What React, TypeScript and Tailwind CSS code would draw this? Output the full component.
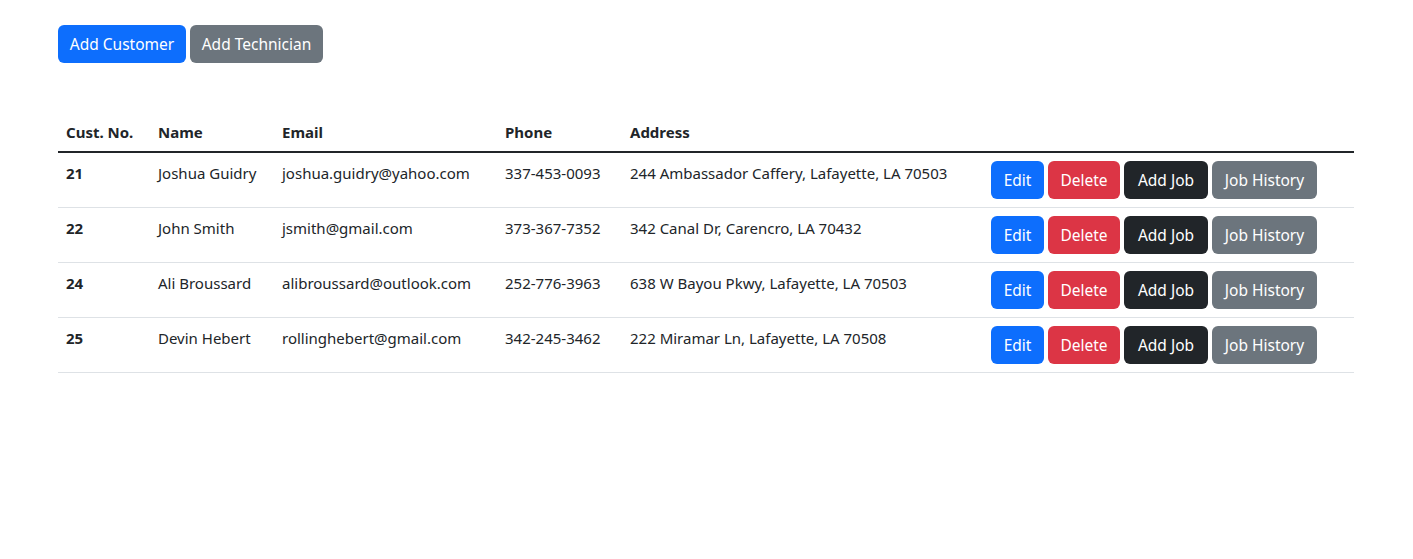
import React from "react";

const rows = [
  { no: "21", name: "Joshua Guidry", email: "joshua.guidry@yahoo.com", phone: "337-453-0093", address: "244 Ambassador Caffery, Lafayette, LA 70503" },
  { no: "22", name: "John Smith", email: "jsmith@gmail.com", phone: "373-367-7352", address: "342 Canal Dr, Carencro, LA 70432" },
  { no: "24", name: "Ali Broussard", email: "alibroussard@outlook.com", phone: "252-776-3963", address: "638 W Bayou Pkwy, Lafayette, LA 70503" },
  { no: "25", name: "Devin Hebert", email: "rollinghebert@gmail.com", phone: "342-245-3462", address: "222 Miramar Ln, Lafayette, LA 70508" },
];

export default function App() {
  return (
    <div
      className="min-h-[559px] bg-white text-[#212529] text-[16px] leading-[24px]"
      style={{ fontFamily: '"Noto Sans", "Open Sans", sans-serif' }}
    >
      <div className="ml-[58px] w-[1296px] pt-[25px]">
        <div className="flex gap-[4px]">
          <button className="h-[38px] w-[128px] rounded-[6px] bg-[#0d6efd] text-white text-[15.5px]">Add Customer</button>
          <button className="h-[38px] w-[133px] rounded-[6px] bg-[#6c757d] text-white text-[15.5px]">Add Technician</button>
        </div>
        <table className="mt-[49px] w-full border-collapse table-fixed">
          <colgroup>
            <col className="w-[92px]" />
            <col className="w-[124px]" />
            <col className="w-[223px]" />
            <col className="w-[125px]" />
            <col className="w-[361px]" />
            <col />
          </colgroup>
          <thead>
            <tr className="h-[40px] border-b-2 border-[#212529] text-left text-[15px] font-bold">
              <th className="px-[8px] align-middle">Cust. No.</th>
              <th className="px-[8px] align-middle">Name</th>
              <th className="px-[8px] align-middle">Email</th>
              <th className="px-[8px] align-middle">Phone</th>
              <th className="px-[8px] align-middle">Address</th>
              <th className="px-[8px]"></th>
            </tr>
          </thead>
          <tbody>
            {rows.map((r) => (
              <tr key={r.no} className="border-b border-[#dee2e6] text-[15px]">
                <td className="px-[8px] py-[8px] align-top font-bold">{r.no}</td>
                <td className="px-[8px] py-[8px] align-top whitespace-nowrap">{r.name}</td>
                <td className="px-[8px] py-[8px] align-top whitespace-nowrap">{r.email}</td>
                <td className="px-[8px] py-[8px] align-top whitespace-nowrap">{r.phone}</td>
                <td className="px-[8px] py-[8px] align-top whitespace-nowrap">{r.address}</td>
                <td className="px-[8px] py-[8px] align-top">
                  <div className="flex gap-[4px] text-[15.5px]">
                    <button className="h-[38px] w-[53px] rounded-[6px] bg-[#0d6efd] text-white">Edit</button>
                    <button className="h-[38px] w-[72px] rounded-[6px] bg-[#dc3545] text-white">Delete</button>
                    <button className="h-[38px] w-[84px] rounded-[6px] bg-[#212529] text-white">Add Job</button>
                    <button className="h-[38px] w-[105px] rounded-[6px] bg-[#6c757d] text-white">Job History</button>
                  </div>
                </td>
              </tr>
            ))}
          </tbody>
        </table>
      </div>
    </div>
  );
}
